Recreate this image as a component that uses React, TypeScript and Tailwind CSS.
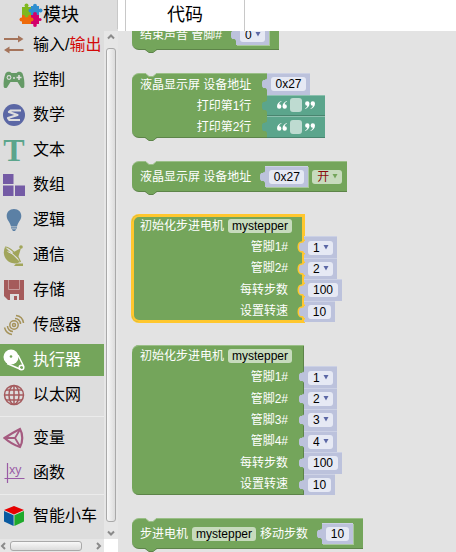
import React from "react";

/* ---------- category icons ---------- */

const ArrowsIcon = () => (
  <svg viewBox="0 0 22 22" className="h-[22px] w-[22px]" fill="#a5745b">
    <path d="M1 4h14V1.500l5.500 3.500L15 8.500V6H1zM20.500 15h-14v-2.500L1 16l5.500 3.500V17h14z" />
  </svg>
);

const GamepadIcon = () => (
  <svg viewBox="0 0 22 22" className="h-[22px] w-[22px]">
    <path
      fill="#659a66"
      d="M2.500 4.500C3.500 2.500 7 2 8.500 4h5C15 2 18.500 2.500 19.500 4.500c1.500 4 2.200 8.500 1.800 13.200-.3 1.600-2.500 1.800-3.500.5L14.500 13h-7l-3.300 5.200c-1 1.300-3.200 1.100-3.500-.5C.3 13 1 8.500 2.500 4.500z"
    />
    <circle cx="6" cy="8.500" r="2.400" fill="#dddddd" />
    <circle cx="6" cy="8.500" r="1.300" fill="#659a66" />
    <circle cx="11" cy="9" r="1" fill="#dddddd" />
    <path d="M16 6v5M13.500 8.500h5" stroke="#dddddd" strokeWidth="1.600" />
  </svg>
);

const MathIcon = () => (
  <svg viewBox="0 0 22 22" className="h-[22px] w-[22px]">
    <circle cx="11" cy="11" r="11" fill="#5b67a5" />
    <path
      d="M18 6.500H8L6 8l8.500 3L5 14l1.500 2H17"
      fill="none"
      stroke="#dddddd"
      strokeWidth="2.200"
      strokeLinejoin="round"
    />
  </svg>
);

const TextIcon = () => (
  <span className="flex h-[22px] w-[22px] items-center justify-center font-['Liberation_Serif',serif] text-[32px] leading-[22px] font-bold text-[#5ba58c]">
    T
  </span>
);

const ArrayIcon = () => (
  <svg viewBox="0 0 22 22" className="h-[22px] w-[22px]" fill="#745ba5">
    <path d="M0 0h10.500v10H0zM0 11.500h10.500V22H0zM12 11.500h10V22H12z" />
  </svg>
);

const BulbIcon = () => (
  <svg viewBox="0 0 22 22" className="h-[22px] w-[22px]" fill="#5b80a5">
    <path d="M11 0c4.500 0 7.300 3.200 7.300 7 0 4-3.300 6-4.300 10.500H8C7 13 3.700 11 3.700 7 3.700 3.200 6.500 0 11 0z" />
    <path d="M8 18.300h6v1.200H8zM8.700 20.200h4.600L12 22h-2z" />
  </svg>
);

const DishIcon = () => (
  <svg viewBox="0 0 22 22" className="h-[22px] w-[22px]" fill="#a1a55b">
    <path d="M2 3c-3 7 0 14 7 16 3 .8 6 .3 8-1z" />
    <path d="M9 9l9-5-3 10z" />
    <path d="M13 19.500h7V22h-9z" />
    <path d="M2 3C7 3 15 11 17.500 18" fill="none" stroke="#a1a55b" strokeWidth="1.200" />
    <path d="M4.500 7.500l6 3" stroke="#dddddd" strokeWidth="1" />
    <circle cx="18" cy="3" r="1.800" />
  </svg>
);

const FloppyIcon = () => (
  <svg viewBox="0 0 22 22" className="h-[22px] w-[22px]">
    <path d="M1 1h20v20H5l-4-4z" fill="#a55b5b" />
    <path d="M5.500 1v9.500h11V1" fill="none" stroke="#c79b9b" strokeWidth="1" />
    <path d="M7 21v-6h9v6h-2v-4h-3v4z" fill="#dddddd" />
  </svg>
);

const SensorIcon = () => (
  <svg viewBox="0 0 22 22" className="h-[22px] w-[22px]" fill="none" stroke="#a5935b" strokeWidth="1.500">
    <circle cx="11" cy="11" r="4.200" />
    <circle cx="11" cy="11" r="1.500" />
    <path d="M12 4.500c3 0 5.500 2.500 5.500 5.500M13 1.500c4 .5 7 3.500 7.500 7.500M10 17.500c-3 0-5.500-2.500-5.500-5.500M9 20.500c-4-.5-6.500-3.500-7.500-7" />
  </svg>
);

const PulleyIcon = () => (
  <svg viewBox="0 0 22 22" className="h-[22px] w-[22px]">
    <circle cx="8" cy="8" r="7.500" fill="#fff" />
    <circle cx="8" cy="7.500" r="1.300" fill="#74a55b" />
    <path d="M15 6l5.800 11.500M4 14.500l14 6" stroke="#fff" strokeWidth="1.500" />
    <circle cx="18.500" cy="18.500" r="2.300" fill="none" stroke="#fff" strokeWidth="1.500" />
  </svg>
);

const GlobeIcon = () => (
  <svg viewBox="0 0 22 22" className="h-[22px] w-[22px]" fill="none" stroke="#a55b5e" strokeWidth="1.500">
    <circle cx="11" cy="11" r="9.500" />
    <ellipse cx="11" cy="11" rx="5" ry="9.500" />
    <path d="M11 1.500v19M1.500 11h19M3 6h16M3 16h16" />
  </svg>
);

const VariableIcon = () => (
  <svg viewBox="0 0 22 22" className="h-[22px] w-[22px]" fill="none" stroke="#a55b80" strokeWidth="2.200">
    <path d="M1.500 11C6 8 11 5 17 2c3 5 3 13 0 18C11 18 6 15 1.500 11z" />
    <path d="M12 11H1.500M12 11l5-8.500M12 11l5 8.500" strokeWidth="1.800" />
  </svg>
);

const FunctionIcon = () => (
  <svg viewBox="0 0 22 22" className="h-[22px] w-[22px]">
    <path d="M4.500 1v20M1.500 16.500h20" stroke="#995ba5" strokeWidth="1.200" />
    <text x="6" y="12" fontSize="12" fontFamily="Noto Sans, sans-serif" fill="#995ba5">
      xy
    </text>
  </svg>
);

const CubeIcon = () => (
  <svg viewBox="0 0 22 22" className="h-[22px] w-[22px]">
    <path d="M11 1l10 4-10 4.500L1 5z" fill="#e60000" />
    <path d="M1 6l9.600 4.300V21L1 16.500z" fill="#0a5aa0" />
    <path d="M21 6l-9.600 4.300V21L21 16.500z" fill="#1faa2c" />
  </svg>
);

const PuzzleIcon = () => (
  <svg viewBox="0 0 24 24" className="h-6 w-6">
    <g fill="#2f8fd0">
      <rect x="12" y="3" width="8" height="9" />
      <circle cx="16" cy="2.600" r="1.900" />
      <circle cx="21.500" cy="7.500" r="2" />
    </g>
    <g fill="#d4006a">
      <rect x="12" y="12" width="8" height="9" />
      <circle cx="16" cy="22" r="1.900" />
      <circle cx="16" cy="11" r="2" />
    </g>
    <g fill="#ee6a0a">
      <rect x="3" y="12" width="9" height="9" />
      <circle cx="2.500" cy="16.500" r="2" />
      <circle cx="12.500" cy="16.500" r="2" />
    </g>
    <g fill="#7fb81e">
      <rect x="3" y="4" width="9" height="8" />
      <circle cx="7.500" cy="2.500" r="2" />
      <circle cx="7.500" cy="12.500" r="2" />
    </g>
    <circle cx="11.500" cy="7.500" r="2" fill="#2f8fd0" />
    <circle cx="21" cy="16.500" r="1.600" fill="#d4006a" />
  </svg>
);

/* ---------- sidebar ---------- */

type Category = { label: React.ReactNode; icon: React.ReactNode; active?: boolean };

const groups: Category[][] = [
  [
    {
      label: (
        <>
          输入/<span className="text-[#d40808]">输出</span>
        </>
      ),
      icon: <ArrowsIcon />,
    },
    { label: "控制", icon: <GamepadIcon /> },
    { label: "数学", icon: <MathIcon /> },
    { label: "文本", icon: <TextIcon /> },
    { label: "数组", icon: <ArrayIcon /> },
    { label: "逻辑", icon: <BulbIcon /> },
    { label: "通信", icon: <DishIcon /> },
    { label: "存储", icon: <FloppyIcon /> },
    { label: "传感器", icon: <SensorIcon /> },
    { label: "执行器", icon: <PulleyIcon />, active: true },
    { label: "以太网", icon: <GlobeIcon /> },
  ],
  [
    { label: "变量", icon: <VariableIcon /> },
    { label: "函数", icon: <FunctionIcon /> },
  ],
  [{ label: "智能小车", icon: <CubeIcon /> }],
];

const Chevron = ({ d }: { d: string }) => (
  <svg viewBox="0 0 8 8" className="h-2 w-2 shrink-0" fill="none" stroke="#8a8a8a" strokeWidth="2">
    <path d={d} />
  </svg>
);

function Sidebar() {
  return (
    <aside className="flex w-[118px] shrink-0 flex-col bg-[#dddddd]">
      <button className="flex h-[29px] shrink-0 items-center border-r border-[#c8c8c8] pl-[19px] text-[18px] leading-none text-black">
        <PuzzleIcon />
        模块
      </button>
      <div className="flex min-h-0 flex-1">
        <nav className="min-w-0 flex-1 overflow-hidden">
          {groups.map((group, g) => (
            <div key={g}>
              {g > 0 && <hr className="mt-[5px] mb-[5px] h-px border-0 bg-[#ebebeb]" />}
              {group.map((c, i) => (
                <button
                  key={i}
                  className={
                    c.active
                      ? "mb-[3px] flex h-8 w-full items-center gap-2 bg-[#74a55b] pl-[3px] text-base whitespace-nowrap text-white"
                      : "mb-[3px] flex h-8 w-full items-center gap-2 pl-[3px] text-base whitespace-nowrap text-black"
                  }
                >
                  <span className="shrink-0">{c.icon}</span>
                  <span>{c.label}</span>
                </button>
              ))}
            </div>
          ))}
        </nav>
        <div className="mt-[2px] flex w-[14px] shrink-0 flex-col items-center bg-[#e6e6e6] pt-[2px]">
          <Chevron d="M1 5.500L4 2.500l3 3" />
          <div className="my-[7px] w-[10px] flex-1 rounded-[3px] border border-[#a9a9a9] bg-linear-to-r from-[#f8f8f8] to-[#dcdcdc]" />
          <Chevron d="M1 2.500l3 3 3-3" />
          <div className="h-[2px]" />
        </div>
      </div>
      <div className="flex h-[13px] shrink-0 bg-white">
        <div className="flex flex-1 items-center justify-between bg-[#e6e6e6] pr-[2px]">
          <Chevron d="M5 1L2 4l3 3" />
          <div className="mr-3 ml-[2px] h-[10px] flex-1 rounded-[3px] border border-[#a9a9a9] bg-linear-to-b from-[#f8f8f8] to-[#dcdcdc]" />
          <Chevron d="M3 1l3 3-3 3" />
        </div>
        <div className="w-[14px]" />
      </div>
    </aside>
  );
}

/* ---------- block parts ---------- */

function Field({ label, value, look }: { label: string; value: string; look: string }) {
  return (
    <input
      aria-label={label}
      defaultValue={value}
      className={`h-[14px] shrink-0 rounded-[3px] p-0 text-center text-xs leading-[14px] text-black outline-none ${look}`}
    />
  );
}

function Dropdown({ label, value, look, arrow }: { label: string; value: string; look: string; arrow: string }) {
  return (
    <span className="relative flex shrink-0">
      <select
        aria-label={label}
        defaultValue={value}
        className={`h-[14px] appearance-none rounded-[3px] py-0 pr-0 pl-[5px] text-xs leading-[14px] outline-none ${look}`}
      >
        <option>{value}</option>
      </select>
      <svg viewBox="0 0 6 5" className="pointer-events-none absolute top-1 right-1 h-[5px] w-[6px]" fill={arrow}>
        <path d="M.5 0h5L3 4.500z" />
      </svg>
    </span>
  );
}

function Plug({ fill, ring }: { fill: string; ring?: boolean }) {
  return (
    <svg viewBox="0 0 8 16" className="absolute top-[2px] -left-[7px] h-4 w-2">
      <path
        d="M8 2H7c0 4-5-1-5 6s5 2 5 6h1z"
        fill={fill}
        stroke={ring ? "#ffc72e" : "none"}
        strokeWidth="3"
      />
      <path d="M8 2H7c0 4-5-1-5 6s5 2 5 6h1z" fill={fill} />
    </svg>
  );
}

function Value({ children, ring }: { children: React.ReactNode; ring?: boolean }) {
  return (
    <div className="relative flex min-h-[21px] w-fit items-center border-t border-[#ccd1e5] bg-[#bcc2dc] px-1">
      <Plug fill="#bcc2dc" ring={ring} />
      {children}
    </div>
  );
}

const Quote = ({ flip }: { flip?: boolean }) => (
  <svg viewBox="0 0 10 8" className={flip ? "h-2 w-[10px] rotate-180" : "h-2 w-[10px]"} fill="#ffffff">
    <path d="M4.500 0C2 .8 0 2.800 0 5.500a2.200 2.200 0 1 0 2.200-2.200C2.400 2 3.200 1.200 4.500.6zM10 0C7.500.8 5.500 2.800 5.500 5.500a2.200 2.200 0 1 0 2.200-2.200C7.900 2 8.700 1.200 10 .6z" />
  </svg>
);

function TextValue({ label }: { label: string }) {
  return (
    <div className="relative flex w-[58px] items-center justify-center gap-[3px] border-t border-b border-t-[#8cc0ae] border-b-[#49846f] bg-[#5ba58c]">
      <Plug fill="#5ba58c" />
      <Quote />
      <Field label={label} value="" look="w-3 bg-[#bedbd1]" />
      <Quote flip />
    </div>
  );
}

const Notches = () => (
  <>
    <svg viewBox="0 0 12 4" className="absolute -top-px left-[13px] h-1 w-3">
      <path d="M0 0h12l-4 3.500H4z" fill="#e3e3e3" />
      <path d="M0 0l4 3.500h4L12 0" fill="none" stroke="#9abf87" strokeWidth="1" />
    </svg>
    <svg viewBox="0 0 12 4" className="absolute -bottom-1 left-[13px] h-1 w-3">
      <path d="M0 0h12L8 3.500H4z" fill="#74a55b" />
      <path d="M0 .5l4 3h4l4-3" fill="none" stroke="#5d8449" strokeWidth="1" />
    </svg>
  </>
);

function InlineBlock({ children }: { children: React.ReactNode }) {
  return (
    <div className="relative flex h-[31px] w-fit shrink-0 items-center gap-1 rounded-l-[7px] border-t border-b border-t-[#9abf87] border-b-[#5d8449] bg-[#74a55b] pr-[5px] pl-2 whitespace-nowrap text-white">
      {children}
      <Notches />
    </div>
  );
}

const InlineValue = ({ children }: { children: React.ReactNode }) => (
  <div className="ml-[10px] shadow-[1px_1px_0_#a8c898]">
    <Value>{children}</Value>
  </div>
);

const NameField = () => <Field label="步进电机名称" value="mystepper" look="w-16 bg-[#c7dbbd]" />;

function StepperBlock({
  rows,
  selected,
  size,
}: {
  rows: { label: string; value: string; pick?: boolean; width?: string }[];
  selected?: boolean;
  size: string;
}) {
  return (
    <div className={`flex shrink-0 ${size}`}>
      <div
        className={
          selected
            ? "grid w-[172px] auto-rows-fr rounded-l-[7px] bg-[#74a55b] pr-4 pl-2 whitespace-nowrap text-white shadow-[inset_0_0_0_2px_#ffc72e,0_0_0_1px_#ffc72e]"
            : "grid w-[172px] auto-rows-fr rounded-l-[7px] bg-[#74a55b] pr-4 pl-2 whitespace-nowrap text-white shadow-[inset_0_1px_0_#9abf87,inset_-1px_-1px_0_#5d8449]"
        }
      >
        <div className="-mr-1 flex items-center justify-between">
          初始化步进电机
          <NameField />
        </div>
        {rows.map((r) => (
          <div key={r.label} className="flex items-center justify-end">
            {r.label}
          </div>
        ))}
      </div>
      <div className="grid auto-rows-fr">
        <div />
        {rows.map((r) => (
          <Value key={r.label} ring={selected}>
            {r.pick ? (
              <Dropdown label={r.label} value={r.value} look="w-[25px] bg-[#e6e9f4] text-black" arrow="#5b67a5" />
            ) : (
              <Field label={r.label} value={r.value} look={`bg-[#e6e9f4] ${r.width}`} />
            )}
          </Value>
        ))}
      </div>
    </div>
  );
}

/* ---------- workspace ---------- */

function Workspace() {
  return (
    <main className="flex min-h-0 flex-1 flex-col gap-[23px] overflow-hidden bg-[#e3e3e3] pl-[14px] text-xs">
      <div className="-mt-3 shrink-0">
        <InlineBlock>
          <span>结束声音 管脚#</span>
          <InlineValue>
            <Dropdown label="管脚#" value="0" look="w-[25px] bg-[#e6e9f4] text-black" arrow="#5b67a5" />
          </InlineValue>
          <span className="w-px" />
        </InlineBlock>
      </div>

      <div className="flex h-[65px] shrink-0">
        <div className="relative grid w-[135px] auto-rows-fr rounded-l-[7px] border-t border-b border-t-[#9abf87] border-b-[#5d8449] bg-[#74a55b] pr-[17px] pl-2 whitespace-nowrap text-white">
          <div className="flex items-center">液晶显示屏 设备地址</div>
          <div className="flex items-center justify-end">打印第1行</div>
          <div className="flex items-center justify-end">打印第2行</div>
          <Notches />
        </div>
        <div className="grid auto-rows-fr">
          <Value>
            <Field label="设备地址" value="0x27" look="w-[35px] bg-[#e6e9f4]" />
          </Value>
          <TextValue label="打印第1行" />
          <TextValue label="打印第2行" />
        </div>
      </div>

      <InlineBlock>
        <span>液晶显示屏 设备地址</span>
        <InlineValue>
          <Field label="设备地址" value="0x27" look="w-[35px] bg-[#e6e9f4]" />
        </InlineValue>
        <Dropdown label="开关" value="开" look="w-[30px] bg-[#c7dbbd] text-[#8a0c0c]" arrow="#74a55b" />
      </InlineBlock>

      <StepperBlock
        selected
        size="h-[107px]"
        rows={[
          { label: "管脚1#", value: "1", pick: true },
          { label: "管脚2#", value: "2", pick: true },
          { label: "每转步数", value: "100", width: "w-[30px]" },
          { label: "设置转速", value: "10", width: "w-[23px]" },
        ]}
      />

      <StepperBlock
        size="h-[150px]"
        rows={[
          { label: "管脚1#", value: "1", pick: true },
          { label: "管脚2#", value: "2", pick: true },
          { label: "管脚3#", value: "3", pick: true },
          { label: "管脚4#", value: "4", pick: true },
          { label: "每转步数", value: "100", width: "w-[30px]" },
          { label: "设置转速", value: "10", width: "w-[23px]" },
        ]}
      />

      <InlineBlock>
        <span>步进电机</span>
        <NameField />
        <span>移动步数</span>
        <InlineValue>
          <Field label="移动步数" value="10" look="w-[23px] bg-[#e6e9f4]" />
        </InlineValue>
        <span className="w-px" />
      </InlineBlock>
    </main>
  );
}

export default function App() {
  return (
    <div className="flex h-screen overflow-hidden bg-white font-['Liberation_Sans','Noto_Sans_CJK_SC',sans-serif]">
      <Sidebar />
      <div className="flex min-w-0 flex-1 flex-col">
        <header className="flex h-[31px] shrink-0 bg-white pl-[7px]">
          <button className="w-[120px] border-r border-l border-[#c8c8c8] pb-[2px] text-[18px] leading-none text-black">
            代码
          </button>
        </header>
        <Workspace />
      </div>
    </div>
  );
}
